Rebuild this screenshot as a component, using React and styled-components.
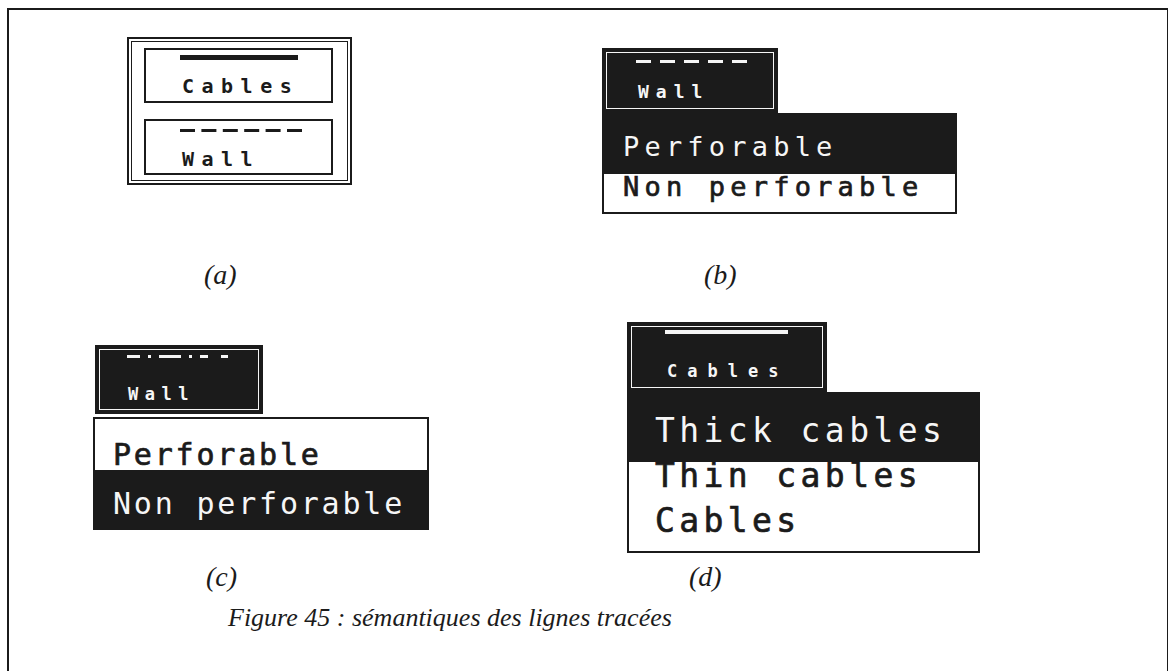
import React from "react";
import styled, { createGlobalStyle } from "styled-components";

const INK = "#1b1b1b";
const PAPER = "#f6f6f6";

const GlobalStyle = createGlobalStyle`
  html, body {
    margin: 0;
    padding: 0;
    background: #ffffff;
  }
  body {
    font-family: "Liberation Serif", serif;
    overflow: hidden;
  }
`;

const Frame = styled.div`
  box-sizing: border-box;
  margin: 8px 0 0 7px;
  width: 1162px;
  height: 670px;
  border: 2px solid ${INK};
  border-bottom: none;
  display: flex;
  flex-direction: column;
`;

const Row = styled.div`
  display: grid;
  grid-template-columns: 540px 1fr;
  height: ${(p) => p.$height}px;
`;

const Cell = styled.div`
  display: flex;
  flex-direction: column;
  align-items: flex-start;
`;

const Slot = styled.div`
  margin-left: ${(p) => p.$x}px;
  margin-top: ${(p) => p.$y}px;
`;

const Label = styled.div`
  margin-top: auto;
  margin-left: ${(p) => p.$x}px;
  font-family: "Liberation Serif", serif;
  font-style: italic;
  font-size: 28px;
  line-height: 30px;
  color: ${INK};
`;

const Caption = styled.div`
  margin: 11px 0 0 219px;
  font-family: "Liberation Serif", serif;
  font-style: italic;
  font-size: 26px;
  line-height: 30px;
  color: ${INK};
`;

/* (a) legend with two line samples */
const LegendBox = styled.div`
  box-sizing: border-box;
  width: 225px;
  height: 148px;
  border: 2px solid ${INK};
  box-shadow: inset 0 0 0 2px #fff, inset 0 0 0 3px ${INK};
  padding: 9px 0 0 15px;
  display: flex;
  flex-direction: column;
  gap: 16px;
`;

const Swatch = styled.div`
  box-sizing: border-box;
  width: 189px;
  height: ${(p) => p.$h}px;
  border: 2px solid ${INK};
  padding: ${(p) => p.$pt}px 0 0 34px;
  display: flex;
  flex-direction: column;
  background: #fff;
`;

/* dark title box of a popup */
const TitleBox = styled.div`
  box-sizing: border-box;
  width: ${(p) => p.$w}px;
  height: ${(p) => p.$h}px;
  margin-left: ${(p) => p.$ml || 0}px;
  margin-bottom: ${(p) => p.$mb || 0}px;
  background: ${INK};
  box-shadow: inset 0 0 0 4px ${INK}, inset 0 0 0 5px ${PAPER};
  padding: ${(p) => p.$pt}px 0 0 ${(p) => p.$pl}px;
  display: flex;
  flex-direction: column;
`;

const SampleText = styled.div`
  font-family: "DejaVu Sans Mono", "Liberation Mono", monospace;
  font-weight: 700;
  font-size: ${(p) => p.$size}px;
  letter-spacing: ${(p) => p.$spacing}px;
  line-height: 1;
  margin-top: ${(p) => p.$mt}px;
  margin-left: ${(p) => p.$ml || 0}px;
  color: ${(p) => (p.$light ? PAPER : INK)};
`;

const Popup = styled.div`
  display: flex;
  flex-direction: column;
  align-items: flex-start;
`;

const Menu = styled.div`
  box-sizing: border-box;
  width: ${(p) => p.$w}px;
  border: 2px solid ${INK};
  background: #fff;
  font-family: "DejaVu Sans Mono", "Liberation Mono", monospace;
  font-size: ${(p) => p.$size}px;
  letter-spacing: ${(p) => p.$spacing}px;
  line-height: 1;
  display: flex;
  flex-direction: column;
`;

const MenuItem = styled.div`
  box-sizing: border-box;
  height: ${(p) => p.$h}px;
  display: flex;
  align-items: flex-end;
  padding: 0 0 ${(p) => p.$pb}px ${(p) => p.$pl}px;
  white-space: pre;
  background: ${(p) => (p.$dark ? INK : "#fff")};
  color: ${(p) => (p.$dark ? PAPER : INK)};
  font-weight: 400;
  -webkit-text-stroke: ${(p) => (p.$dark ? "0" : "0.7px")} ${INK};
`;

const patterns = {
  solid: "none",
  dashed6: "15 6.4",
  dashedSmall: "15 9",
  dashdot: "13 8 3 8 22 8 3 8 8",
};

const Stroke = ({ width, thickness, pattern, light }) => (
  <svg width={width} height={thickness} style={{ display: "block" }}>
    <line
      x1="0"
      y1={thickness / 2}
      x2={width}
      y2={thickness / 2}
      stroke={light ? PAPER : INK}
      strokeWidth={thickness}
      strokeDasharray={patterns[pattern]}
    />
  </svg>
);

const App = () => {
  return (
    <>
      <GlobalStyle />
      <Frame>
        <Row $height={280}>
          <Cell>
            <Slot $x={118} $y={27}>
              <LegendBox>
                <Swatch $h={55} $pt={5}>
                  <Stroke width={118} thickness={5} pattern="solid" />
                  <SampleText $size={20} $spacing={7.5} $mt={16} $ml={2}>
                    Cables
                  </SampleText>
                </Swatch>
                <Swatch $h={56} $pt={8}>
                  <Stroke width={122} thickness={3} pattern="dashed6" />
                  <SampleText $size={20} $spacing={7.5} $mt={17} $ml={2}>
                    Wall
                  </SampleText>
                </Swatch>
              </LegendBox>
            </Slot>
            <Label $x={195}>(a)</Label>
          </Cell>
          <Cell>
            <Slot $x={53} $y={38}>
              <Popup>
                <TitleBox $w={176} $h={65} $pt={12} $pl={34}>
                  <Stroke width={111} thickness={3} pattern="dashedSmall" light />
                  <SampleText $light $size={18} $spacing={7} $mt={20} $ml={2}>
                    Wall
                  </SampleText>
                </TitleBox>
                <Menu $w={355} $size={27} $spacing={5.2}>
                  <MenuItem $dark $h={59} $pb={14} $pl={19}>
                    Perforable
                  </MenuItem>
                  <MenuItem $h={38} $pb={12} $pl={19}>
                    Non perforable
                  </MenuItem>
                </Menu>
              </Popup>
            </Slot>
            <Label $x={155}>(b)</Label>
          </Cell>
        </Row>
        <Row $height={302}>
          <Cell>
            <Slot $x={84} $y={55}>
              <Popup>
                <TitleBox $w={168} $h={69} $ml={2} $mb={3} $pt={10} $pl={32}>
                  <Stroke width={101} thickness={3} pattern="dashdot" light />
                  <SampleText $light $size={17} $spacing={6.5} $mt={28} $ml={1}>
                    Wall
                  </SampleText>
                </TitleBox>
                <Menu $w={336} $size={30} $spacing={2.8}>
                  <MenuItem $h={51} $pb={0} $pl={18}>
                    Perforable
                  </MenuItem>
                  <MenuItem $dark $h={58} $pb={9} $pl={18}>
                    Non perforable
                  </MenuItem>
                </Menu>
              </Popup>
            </Slot>
            <Label $x={197}>(c)</Label>
          </Cell>
          <Cell>
            <Slot $x={78} $y={32}>
              <Popup>
                <TitleBox $w={200} $h={70} $pt={8} $pl={38}>
                  <Stroke width={123} thickness={4} pattern="solid" light />
                  <SampleText $light $size={17} $spacing={10} $mt={29} $ml={2}>
                    Cables
                  </SampleText>
                </TitleBox>
                <Menu $w={353} $size={33} $spacing={4.4}>
                  <MenuItem $dark $h={68} $pb={15} $pl={26}>
                    Thick cables
                  </MenuItem>
                  <MenuItem $h={45} $pb={15} $pl={26}>
                    Thin cables
                  </MenuItem>
                  <MenuItem $h={44} $pb={14} $pl={26}>
                    Cables
                  </MenuItem>
                </Menu>
              </Popup>
            </Slot>
            <Label $x={140}>(d)</Label>
          </Cell>
        </Row>
        <Caption>Figure 45 : sémantiques des lignes tracées</Caption>
      </Frame>
    </>
  );
};

export default App;
